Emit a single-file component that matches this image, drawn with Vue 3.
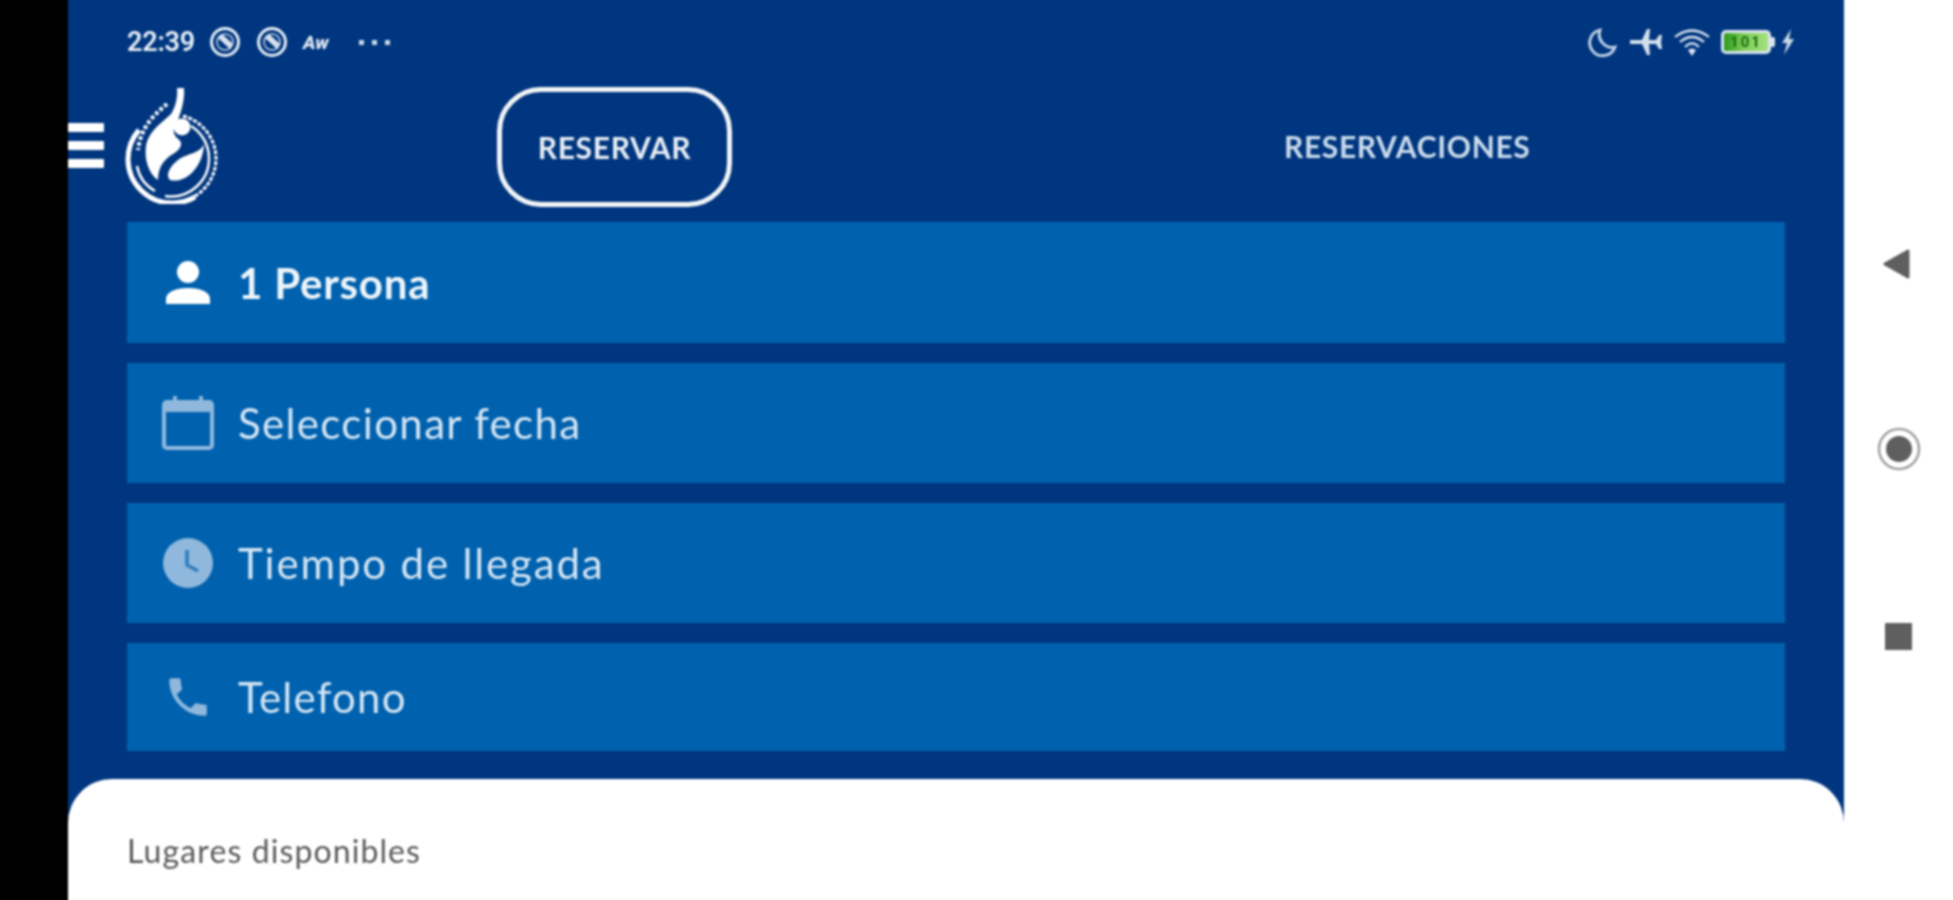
<script setup>
const rows = [
  { key: 'person', label: '1 Persona', cls: 'row-person' },
  { key: 'calendar', label: 'Seleccionar fecha', cls: 'row-a' },
  { key: 'clock', label: 'Tiempo de llegada', cls: 'row-clock' },
  { key: 'phone', label: 'Telefono', cls: 'row-phone' }
]
</script>

<template>
  <div class="screen">
    <div class="bezel"></div>
    <main class="phone">
      <div class="status">
        <div class="status-left">
          <span class="time">22:39</span>
          <svg class="nfc" viewBox="0 0 32 32"><circle cx="16" cy="16" r="13.5" fill="none" stroke="#e6eef6" stroke-width="3"/><circle cx="16" cy="16" r="8" fill="none" stroke="#c5d5e8" stroke-width="1.500"/><path d="M10 11 L22 22 M12 9 L23 19" fill="none" stroke="#e6eef6" stroke-width="2.600"/></svg>
          <svg class="nfc" viewBox="0 0 32 32"><circle cx="16" cy="16" r="13.5" fill="none" stroke="#e6eef6" stroke-width="3"/><circle cx="16" cy="16" r="8" fill="none" stroke="#c5d5e8" stroke-width="1.500"/><path d="M10 11 L22 22 M12 9 L23 19" fill="none" stroke="#e6eef6" stroke-width="2.600"/></svg>
          <span class="aw">Aw</span>
          <span class="dots"><i></i><i></i><i></i></span>
        </div>
        <div class="status-right">
          <svg class="moon" viewBox="0 0 30 30"><path d="M12 3 A13 13 0 1 0 27 20 A13 13 0 0 1 12 3 Z" fill="none" stroke="#c4d4e8" stroke-width="2.800"/></svg>
          <svg class="plane" viewBox="0 0 34 28"><path d="M1 12 L13 12 L18 1 L21 1 L20 12 L27 12 L30 7 L33 7 L32 14 L33 21 L30 21 L27 16 L20 16 L21 27 L18 27 L13 16 L1 16 Z" fill="#d4dfec"/></svg>
          <svg class="wifi" viewBox="0 0 38 30"><g fill="none" stroke="#dbe5f0" stroke-width="2.200"><path d="M2 10 Q19 -3 36 10"/><path d="M7 15 Q19 5 31 15"/><path d="M12 20 Q19 13 26 20"/></g><path d="M15 23 Q19 20 23 23 L19 29 Z" fill="#dbe5f0"/></svg>
          <div class="battery">
            <div class="battery-body"><span class="battery-level">101</span></div>
            <span class="battery-cap"></span>
          </div>
          <svg class="bolt" viewBox="0 0 16 26"><path d="M11 0 L2 14 L7 14 L4 26 L14 10 L9 10 Z" fill="#c9d7e7"/></svg>
        </div>
      </div>

      <header class="header">
        <div class="burger"><i></i><i></i><i></i></div>
        <svg class="logo" viewBox="0 0 94 116">
          <g fill="none" stroke="#fff">
            <path d="M14 42 A45 45 0 0 0 3 72 A44 44 0 0 0 47 115 A44 44 0 0 0 70 109" stroke-width="5"/>
            <path d="M58 28 A44 44 0 0 1 91 70 A44 44 0 0 1 62 112" stroke-width="3" stroke-dasharray="4 1.500"/>
            <path d="M66 38 A38 38 0 0 1 84 70 A38 38 0 0 1 40 108" stroke-width="2.500"/>
            <path d="M42 16 C30 26 16 38 13 62" stroke-width="4" stroke-dasharray="3.500 2.500"/>
            <path d="M12 78 A36 36 0 0 0 30 103" stroke-width="2.500"/>
          </g>
          <path d="M52 0 L59 0 C60 12 56 24 53 32 C48 38 47 45 52 50 C58 54 58 60 48 66 C38 72 33 80 33 92 C24 86 19 72 21 58 C24 42 38 34 46 26 C50 20 53 10 52 0 Z" fill="#fff"/>
          <circle cx="57" cy="39" r="8.500" fill="#fff"/>
          <path d="M79 56 C75 66 62 65 53 72 C45 78 40 87 45 92 C60 96 78 80 79 56 Z" fill="#fff"/>
        </svg>
        <button class="tab tab-on">RESERVAR</button>
        <button class="tab tab-off">RESERVACIONES</button>
      </header>

      <section class="rows">
        <div v-for="r in rows" :key="r.key" class="row" :class="r.cls">
          <span class="icon-box">
            <svg v-if="r.key === 'person'" class="i-person" viewBox="0 0 44 44"><circle cx="22" cy="11" r="11" fill="#fff"/><path d="M0 43 L0 38 C0 30 12 27 22 27 C32 27 44 30 44 38 L44 43 Z" fill="#fff"/></svg>
            <svg v-else-if="r.key === 'calendar'" class="i-cal" viewBox="0 0 52 54"><path d="M13 0 V6 M39 0 V6" stroke="#8fb8dc" stroke-width="4"/><rect x="2" y="6" width="48" height="46" rx="3" fill="none" stroke="#8fb8dc" stroke-width="4"/><rect x="2" y="6" width="48" height="10" fill="#8fb8dc"/></svg>
            <svg v-else-if="r.key === 'clock'" class="i-clock" viewBox="0 0 50 50"><circle cx="25" cy="25" r="25" fill="#8fb8dc"/><path d="M24 12 V27 L35 33" fill="none" stroke="#2f7dbd" stroke-width="3.600"/></svg>
            <svg v-else class="i-phone" viewBox="0 0 24 24"><path d="M6.600 10.800c1.400 2.800 3.800 5.100 6.600 6.600l2.200-2.200c.3-.3.7-.4 1-.2 1.100.4 2.300.6 3.600.6.600 0 1 .4 1 1V20c0 .6-.4 1-1 1C10.600 21 3 13.400 3 4c0-.6.400-1 1-1h3.500c.6 0 1 .4 1 1 0 1.300.2 2.500.6 3.600.1.300 0 .7-.2 1z" fill="#8fb8dc"/></svg>
          </span>
          <span class="label">{{ r.label }}</span>
        </div>
      </section>

      <section class="sheet">
        <h2 class="sheet-title">Lugares disponibles</h2>
      </section>
    </main>
    <nav class="nav">
      <svg class="nav-back" viewBox="0 0 27 30"><path d="M2 15 L25 2 L25 28 Z" fill="#5f5f5f" stroke="#5f5f5f" stroke-width="3" stroke-linejoin="round"/></svg>
      <svg class="nav-home" viewBox="0 0 44 44"><circle cx="22" cy="22" r="20" fill="none" stroke="#a0a0a0" stroke-width="2.500"/><circle cx="22" cy="22" r="13" fill="#5f5f5f"/></svg>
      <span class="nav-recent"></span>
    </nav>
  </div>
</template>

<style>
html, body { margin: 0; background: #fff; overflow: hidden; }
</style>

<style scoped>
.screen {
  display: flex;
  width: 1961px;
  height: 908px;
  margin: -4px;
  overflow: hidden;
  background: #fff;
  font-family: "Lato", "Noto Sans", sans-serif;
  filter: blur(0.9px);
}
.bezel { width: 72px; flex: none; background: #000; }
.phone {
  width: 1776px;
  flex: none;
  display: flex;
  flex-direction: column;
  background: #00367f;
}
.status {
  height: 88px;
  flex: none;
  box-sizing: border-box;
  padding: 4px 48px 0 59px;
  display: flex;
  align-items: center;
  justify-content: space-between;
}
.status-left, .status-right { display: flex; align-items: center; }
.time { width: 70px; color: #e6eef6; font: 600 27px "Roboto", sans-serif; letter-spacing: -0.2px; }
.nfc { width: 32px; height: 32px; margin-left: 12px; }
.nfc + .nfc { margin-left: 15px; }
.aw { margin-left: 15px; width: 30px; color: #e6eef6; font: italic 800 19px "Roboto", sans-serif; }
.dots { display: flex; gap: 8px; margin-left: 26px; }
.dots i { width: 5px; height: 5px; background: #c9d7e7; }
.moon { width: 30px; height: 30px; margin-left: 2px; }
.plane { width: 34px; height: 28px; margin-left: 11px; }
.wifi { width: 38px; height: 30px; margin-left: 10px; }
.battery { display: flex; align-items: center; margin-left: 10px; }
.battery-body {
  width: 50px;
  height: 24px;
  box-sizing: border-box;
  border: 3px solid #d9e4f0;
  border-radius: 5px;
  background: linear-gradient(90deg, #2c9a1c, #7fcf55 45%, #a5e07f);
  display: flex;
  align-items: center;
  justify-content: center;
}
.battery-level { color: #146a12; font: 700 15px "Roboto", sans-serif; letter-spacing: 2px; }
.battery-cap { width: 4px; height: 10px; background: #d9e4f0; border-radius: 0 2px 2px 0; }
.bolt { width: 16px; height: 26px; margin-left: 5px; }

.header { height: 138px; flex: none; display: flex; align-items: flex-start; }
.burger { width: 36px; margin-top: 39px; display: flex; flex-direction: column; gap: 9px; }
.burger i { height: 9px; background: #fff; border-radius: 1px; }
.logo { width: 94px; height: 116px; margin-left: 21px; margin-top: 4px; }
.tab { font-family: inherit; padding: 0; background: transparent; font-weight: 700; font-size: 30px; letter-spacing: 0.7px; }
.tab-on {
  width: 235px;
  height: 120px;
  box-sizing: border-box;
  margin-left: 278px;
  margin-top: 3px;
  border: 5px solid #f2f5f7;
  border-radius: 44px;
  color: #e8eef5;
}
.tab-off {
  margin-left: 552px;
  margin-top: 2px;
  height: 120px;
  border: 0;
  color: #cbdcec;
  font-weight: 700;
  letter-spacing: 0.65px;
}

.rows { margin-left: 59px; width: 1658px; display: flex; flex-direction: column; gap: 20px; flex: none; }
.row { height: 120px; background: #0061ae; display: flex; align-items: center; }
.row-person { height: 121px; }
.row-phone { height: 108px; }
.icon-box { width: 122px; flex: none; display: flex; justify-content: center; }
.i-person { width: 44px; height: 44px; }
.i-cal { width: 52px; height: 54px; }
.i-clock { width: 50px; height: 50px; }
.i-phone { width: 50px; height: 50px; }
.label { margin-left: -11px; font-size: 42px; letter-spacing: 1.35px; color: #d4e5f3; }
.row-person .label { color: #eef5fa; font-weight: 700; letter-spacing: 0.8px; }
.row-clock .label { letter-spacing: 1.85px; }
.row-phone .label { letter-spacing: 1.25px; }

.sheet {
  margin-top: 28px;
  flex: 1;
  background: #fff;
  border-radius: 44px 44px 0 0;
  padding: 0 59px;
}
.sheet-title { margin: 52px 0 0; font-size: 32px; letter-spacing: 1.1px; font-weight: 400; color: #5a5a5a; line-height: 40px; }

.nav { flex: 1; display: flex; flex-direction: column; align-items: center; padding-top: 253px; padding-right: 4px; }
.nav-back { width: 27px; height: 30px; margin-right: 4px; }
.nav-home { width: 44px; height: 44px; margin-top: 148px; }
.nav-recent { width: 27px; height: 27px; background: #5f5f5f; margin-top: 152px; }
</style>
